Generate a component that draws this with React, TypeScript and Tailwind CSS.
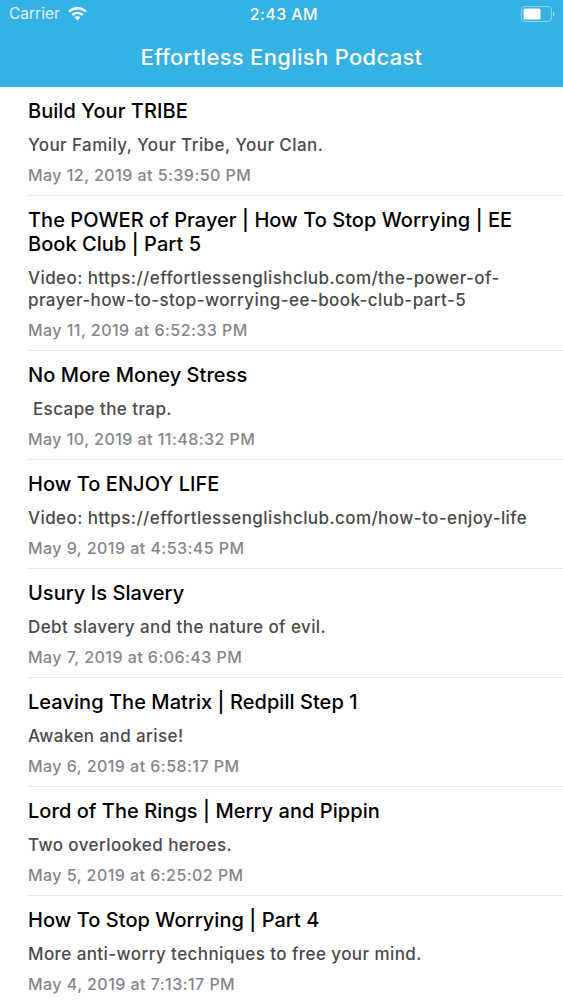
const posts = [
  { title: "Build Your TRIBE", body: "Your Family, Your Tribe, Your Clan.", date: "May 12, 2019 at 5:39:50 PM" },
  {
    title: "The POWER of Prayer | How To Stop Worrying | EE Book Club | Part 5",
    body: "Video: https://effortlessenglishclub.com/the-power-of-prayer-how-to-stop-worrying-ee-book-club-part-5",
    date: "May 11, 2019 at 6:52:33 PM",
  },
  { title: "No More Money Stress", body: "\u00a0Escape the trap.", date: "May 10, 2019 at 11:48:32 PM" },
  { title: "How To ENJOY LIFE", body: "Video: https://effortlessenglishclub.com/how-to-enjoy-life", date: "May 9, 2019 at 4:53:45 PM" },
  { title: "Usury Is Slavery", body: "Debt slavery and the nature of evil.", date: "May 7, 2019 at 6:06:43 PM" },
  { title: "Leaving The Matrix | Redpill Step 1", body: "Awaken and arise!", date: "May 6, 2019 at 6:58:17 PM" },
  { title: "Lord of The Rings | Merry and Pippin", body: "Two overlooked heroes.", date: "May 5, 2019 at 6:25:02 PM" },
  { title: "How To Stop Worrying | Part 4", body: "More anti-worry techniques to free your mind.", date: "May 4, 2019 at 7:13:17 PM" },
];

function WifiIcon() {
  return (
    <svg width="19" height="14" viewBox="0 0 19 14" fill="white">
      <path d="M9.5 0C5.9 0 2.6 1.4 0.2 3.7L1.9 5.5C3.9 3.6 6.6 2.4 9.5 2.4S15.1 3.6 17.1 5.5L18.8 3.7C16.4 1.4 13.1 0 9.5 0Z" />
      <path d="M9.5 4.7C7.2 4.7 5.1 5.6 3.5 7.1L5.2 8.9C6.3 7.8 7.8 7.1 9.5 7.1S12.7 7.8 13.8 8.9L15.5 7.1C13.9 5.6 11.8 4.7 9.5 4.7Z" />
      <path d="M9.5 9.3C8.4 9.3 7.5 9.7 6.8 10.4L9.5 13.4L12.2 10.4C11.5 9.7 10.6 9.3 9.5 9.3Z" />
    </svg>
  );
}

function BatteryIcon() {
  return (
    <svg width="34" height="16" viewBox="0 0 34 16" fill="none">
      <rect x="0.5" y="0.5" width="30" height="15" rx="3.5" stroke="white" strokeOpacity="0.45" />
      <rect x="2.5" y="2.5" width="17" height="11" rx="1.5" fill="white" />
      <path d="M32 5.5C33 5.8 33.5 6.8 33.5 8S33 10.2 32 10.5Z" fill="white" fillOpacity="0.5" />
    </svg>
  );
}

export default function App() {
  return (
    <div className="h-[1000px] overflow-hidden bg-white font-['Inter','Liberation_Sans',sans-serif]">
      {/* Nav bar */}
      <header className="h-[87px] bg-[#35b2e4] text-white">
        <div className="flex h-[28px] items-center justify-between pr-[8px] pl-[9px] text-[15.5px]">
          <div className="flex w-[150px] items-center gap-2">
            <span className="opacity-85">Carrier</span>
            <WifiIcon />
          </div>
          <span className="text-[16px] font-medium tracking-[0.4px]">2:43 AM</span>
          <div className="flex w-[146px] justify-end">
            <BatteryIcon />
          </div>
        </div>
        <h1 className="mt-[7px] text-center text-[22px] leading-[44px] font-medium tracking-[0.3px]">Effortless English Podcast</h1>
      </header>

      {/* Episode list */}
      <main>
        {posts.map((post) => (
          <div key={post.date} className="pt-3 pl-7 last:[&>div]:border-b-0">
            <div className="border-b border-[#e6e6e8] pr-6 pb-[9px]">
              <h2 className="text-[20px] leading-[24px] font-medium tracking-[0.05px] text-black">{post.title}</h2>
              <p className="mt-[11px] text-[17px] leading-[22px] font-medium tracking-[0.42px] text-[#4a4a4a]">{post.body}</p>
              <p className="mt-[8px] text-[16px] leading-[22px] font-medium tracking-[0.46px] text-[#85858b]">{post.date}</p>
            </div>
          </div>
        ))}
      </main>
    </div>
  );
}
